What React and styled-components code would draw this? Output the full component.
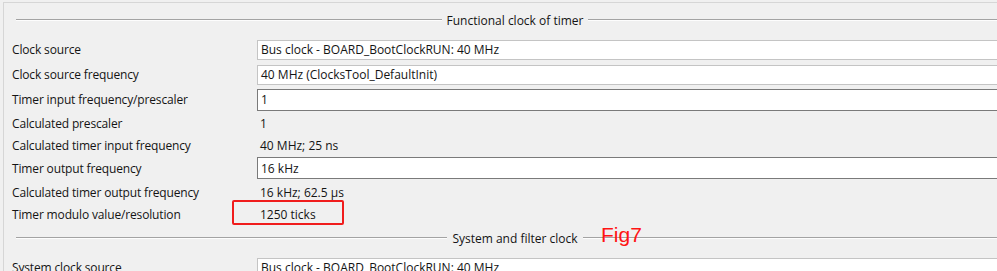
import styled, { createGlobalStyle } from "styled-components";

const GlobalStyle = createGlobalStyle`
  html, body {
    margin: 0;
    padding: 0;
    background: #f0f0f0;
    overflow: hidden;
  }
  body {
    font-family: "Open Sans", "Noto Sans", sans-serif;
    font-size: 12px;
    color: #141414;
  }
`;

const Screen = styled.div`
  width: 1020px;
  height: 271px;
  padding: 2px 0 0 3px;
  box-sizing: border-box;
`;

const Panel = styled.div`
  border-top: 1px solid #d6d6d6;
  border-left: 1px solid #d6d6d6;
  width: 1011px;
  height: 100%;
  box-sizing: border-box;
`;

const SectionHeader = styled.div`
  position: relative;
  display: flex;
  align-items: center;
  height: ${({ $height }) => $height}px;
  padding: 0 0 ${({ $shift }) => $shift || 0}px 12px;
  box-sizing: border-box;
`;

const Rule = styled.div`
  flex: 1;
  height: 0;
  border-top: 1px solid #a3a3a3;
  border-bottom: 1px solid #fdfdfd;
`;

const Title = styled.span`
  padding: 0 5px;
  white-space: nowrap;
`;

const Row = styled.div`
  display: flex;
  align-items: center;
  height: ${({ $height }) => $height}px;
`;

const Label = styled.div`
  width: 253px;
  padding-left: 8px;
  box-sizing: border-box;
  flex-shrink: 0;
  white-space: nowrap;
  letter-spacing: -0.15px;
`;

const Field = styled.div`
  flex: 1;
  height: ${({ $editable }) => ($editable ? 22 : 20)}px;
  display: flex;
  align-items: center;
  padding-left: 3px;
  background: #fff;
  border: 1px solid ${({ $editable }) => ($editable ? "#7a7a7a" : "#c4c4c4")};
  box-sizing: border-box;
  white-space: nowrap;
`;

const Value = styled.div`
  position: relative;
  flex: 1;
  padding-left: 3px;
  white-space: nowrap;
`;

const Highlight = styled.div`
  position: absolute;
  left: -25px;
  top: -6px;
  width: 112px;
  height: 25px;
  border: 2px solid #f01c1c;
  border-radius: 2px;
  box-sizing: border-box;
`;

const FigNote = styled.span`
  position: absolute;
  left: 597px;
  top: -1px;
  font-family: "Liberation Sans", Arial, sans-serif;
  font-size: 21px;
  line-height: 21px;
  color: #ff1414;
`;

const functionalRows = [
  { label: "Clock source", value: "Bus clock - BOARD_BootClockRUN: 40 MHz", kind: "combo", h: 25 },
  { label: "Clock source frequency", value: "40 MHz (ClocksTool_DefaultInit)", kind: "combo", h: 25 },
  { label: "Timer input frequency/prescaler", value: "1", kind: "edit", h: 25 },
  { label: "Calculated prescaler", value: "1", kind: "text", h: 23 },
  { label: "Calculated timer input frequency", value: "40 MHz; 25 ns", kind: "text", h: 21 },
  { label: "Timer output frequency", value: "16 kHz", kind: "edit", h: 24 },
  { label: "Calculated timer output frequency", value: "16 kHz; 62.5 µs", kind: "text", h: 24 },
  { label: "Timer modulo value/resolution", value: "1250 ticks", kind: "text", h: 21, marked: true },
];

function PropertyRow({ row }) {
  return (
    <Row $height={row.h}>
      <Label>{row.label}</Label>
      {row.kind === "text" ? (
        <Value>
          {row.marked && <Highlight />}
          {row.value}
        </Value>
      ) : (
        <Field $editable={row.kind === "edit"}>{row.value}</Field>
      )}
    </Row>
  );
}

export default function App() {
  return (
    <>
      <GlobalStyle />
      <Screen>
        <Panel>
          <SectionHeader $height={34}>
            <Rule />
            <Title>Functional clock of timer</Title>
            <Rule />
          </SectionHeader>
          {functionalRows.map((row) => (
            <PropertyRow key={row.label} row={row} />
          ))}
          <SectionHeader $height={30} $shift={4}>
            <Rule />
            <Title>System and filter clock</Title>
            <Rule />
            <FigNote>Fig7</FigNote>
          </SectionHeader>
          <PropertyRow
            row={{
              label: "System clock source",
              value: "Bus clock - BOARD_BootClockRUN: 40 MHz",
              kind: "combo",
              h: 25,
            }}
          />
        </Panel>
      </Screen>
    </>
  );
}
